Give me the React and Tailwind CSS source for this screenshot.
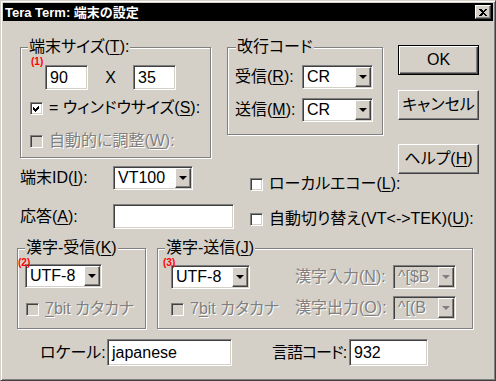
import React from "react";

const font = "font-['Liberation_Sans','Noto_Sans_CJK_JP',sans-serif]";
const sunken =
  "border border-t-[#808080] border-l-[#808080] border-b-white border-r-white shadow-[inset_1px_1px_0_#404040,inset_-1px_-1px_0_#d4d0c8]";
const raised =
  "border border-t-white border-l-white border-b-[#404040] border-r-[#404040] shadow-[inset_-1px_-1px_0_#808080]";
const etched = "border border-[#808080] shadow-[1px_1px_0_#fff,inset_1px_1px_0_#fff]";
const grayText = "text-[#808080] [text-shadow:1px_1px_0_#fff]";

function U({ children }) {
  return <span className="underline underline-offset-[2px]">{children}</span>;
}

function Arrow({ disabled }) {
  return (
    <span
      className={`w-0 h-0 border-x-[4px] border-x-transparent border-t-[4px] ${
        disabled ? "border-t-[#808080]" : "border-t-black"
      }`}
    />
  );
}

function Combo({ className, value, disabled }) {
  return (
    <div className={`${className} shrink-0 h-[24px] p-[1px] flex ${sunken} ${disabled ? "bg-[#d4d0c8]" : "bg-white"}`}>
      <span className={`flex-1 flex items-center pl-[3px] text-[16px] ${disabled ? grayText : ""}`}>{value}</span>
      <span className={`w-[16px] h-full bg-[#d4d0c8] flex items-center justify-center ${raised}`}>
        <Arrow disabled={disabled} />
      </span>
    </div>
  );
}

function Field({ className, value }) {
  return (
    <div className={`${className} shrink-0 bg-white flex items-center pl-[4px] ${sunken}`}>{value}</div>
  );
}

function Check({ checked, disabled, children }) {
  return (
    <div className="flex items-center whitespace-nowrap">
      <span className={`w-[13px] h-[13px] relative shrink-0 ${sunken} ${disabled ? "bg-[#d4d0c8]" : "bg-white"}`}>
        {checked && (
          <svg className="absolute left-[1px] top-[1px]" width="9" height="9" viewBox="0 0 9 9" shapeRendering="crispEdges">
            <path d="M1 3 L3 5 L7 1 L7 4 L3 8 L1 6 Z" fill="#000" />
          </svg>
        )}
      </span>
      <span className={`ml-[6px] ${disabled ? grayText : ""}`}>{children}</span>
    </div>
  );
}

function Legend({ children, className }) {
  return (
    <span className={`absolute top-[-9px] px-[1px] bg-[#d4d0c8] whitespace-nowrap ${className}`}>{children}</span>
  );
}

function Mark({ children, className }) {
  return (
    <span className={`absolute text-[10px] font-bold text-[#ff0000] font-['Liberation_Sans',sans-serif] ${className}`}>
      {children}
    </span>
  );
}

function Button({ children, isDefault, className }) {
  return (
    <div
      className={`w-[81px] h-[30px] flex items-center justify-center ${className} ${
        isDefault
          ? "border border-black shadow-[inset_1px_1px_0_#fff,inset_-1px_-1px_0_#404040,inset_-2px_-2px_0_#808080]"
          : raised
      }`}
    >
      {children}
    </div>
  );
}

export default function App() {
  return (
    <div
      className={`w-[496px] h-[381px] p-[1px] bg-[#d4d0c8] border border-t-[#d4d0c8] border-l-[#d4d0c8] border-b-[#404040] border-r-[#404040] shadow-[inset_1px_1px_0_#fff,inset_-1px_-1px_0_#808080] ${font} text-black text-[16px] leading-none [font-feature-settings:'palt'] select-none overflow-hidden`}
    >
      {/* title bar */}
      <div className="mx-[1px] mt-[1px] h-[18px] bg-black flex items-center justify-between pl-[2px] pr-[2px]">
        <span className="text-white font-bold text-[13px]">Tera Term: 端末の設定</span>
        <span className={`w-[16px] h-[14px] bg-[#d4d0c8] flex items-center justify-center ${raised}`}>
          <svg width="8" height="7" viewBox="0 0 8 7" shapeRendering="crispEdges">
            <path d="M0 0h2l2 2 2-2h2v1L5 3.5 8 6v1H6L4 5 2 7H0V6l3-2.5L0 1z" fill="#000" />
          </svg>
        </span>
      </div>

      <div className="flex">
        {/* left column */}
        <div className="ml-[18px] w-[363px] shrink-0">
          <div className="mt-[26px] flex gap-[16px] items-start">
            <div className={`relative w-[191px] h-[111px] pt-[17px] shrink-0 ${etched}`}>
              <Legend className="left-[7px]">
                端末サイズ(<U>T</U>):
              </Legend>
              <Mark className="left-[10px] top-[9px]">(1)</Mark>
              <div className="ml-[24px] flex items-center">
                <Field className="w-[43px] h-[25px]" value="90" />
                <span className="w-[45px] shrink-0 text-center">X</span>
                <Field className="w-[43px] h-[25px]" value="35" />
              </div>
              <div className="mt-[10px] ml-[9px]">
                <Check checked>
                  = ウィンドウサイズ(<U>S</U>):
                </Check>
              </div>
              <div className="mt-[17px] ml-[9px]">
                <Check disabled>
                  自動的に調整(<U>W</U>):
                </Check>
              </div>
            </div>

            <div className={`relative w-[156px] h-[88px] pt-[17px] shrink-0 ${etched}`}>
              <Legend className="left-[8px]">改行コード</Legend>
              <div className="ml-[7px] flex items-center">
                <span className="w-[67px] shrink-0 whitespace-nowrap">
                  受信(<U>R</U>):
                </span>
                <Combo className="w-[71px]" value="CR" />
              </div>
              <div className="mt-[9px] ml-[7px] flex items-center">
                <span className="w-[67px] shrink-0 whitespace-nowrap">
                  送信(<U>M</U>):
                </span>
                <Combo className="w-[71px]" value="CR" />
              </div>
            </div>
          </div>

          <div className="mt-[8px] flex items-start">
            <span className="w-[93px] h-[24px] shrink-0 flex items-center whitespace-nowrap">
              端末ID(<U>I</U>):
            </span>
            <Combo className="w-[80px]" value="VT100" />
            <div className="ml-[57px] mt-[10px] shrink-0">
              <Check>
                ローカルエコー(<U>L</U>):
              </Check>
            </div>
          </div>

          <div className="mt-[12px] flex items-start">
            <span className="w-[93px] h-[25px] shrink-0 flex items-center whitespace-nowrap">
              応答(<U>A</U>):
            </span>
            <Field className="w-[121px] h-[25px]" value="" />
            <div className="ml-[16px] mt-[7px] shrink-0">
              <Check>
                自動切り替え(VT&lt;-&gt;TEK)(<U>U</U>):
              </Check>
            </div>
          </div>
        </div>

        {/* buttons */}
        <div className="ml-[15px] mt-[24px] flex flex-col shrink-0">
          <Button isDefault>OK</Button>
          <Button className="mt-[15px]">キャンセル</Button>
          <Button className="mt-[24px]">
            ヘルプ(<U>H</U>)
          </Button>
        </div>
      </div>

      {/* kanji groups */}
      <div className="mt-[19px] ml-[15px] flex gap-[11px]">
        <div className={`relative w-[129px] h-[81px] pt-[15px] shrink-0 ${etched}`}>
          <Legend className="left-[7px]">
            漢字-受信(<U>K</U>)
          </Legend>
          <Mark className="left-[0px] top-[9px]">(2)</Mark>
          <Combo className="ml-[7px] w-[77px]" value="UTF-8" />
          <div className="mt-[13px] ml-[8px]">
            <Check disabled>
              <U>7</U>bit カタカナ
            </Check>
          </div>
        </div>

        <div className={`relative w-[316px] h-[81px] pt-[16px] flex shrink-0 ${etched}`}>
          <Legend className="left-[7px]">
            漢字-送信(<U>J</U>)
          </Legend>
          <Mark className="left-[5px] top-[9px]">(3)</Mark>
          <div className="ml-[13px] w-[79px] shrink-0">
            <Combo className="w-[79px]" value="UTF-8" />
            <div className="mt-[12px] ml-[0px]">
              <Check disabled>
                7<U>b</U>it カタカナ
              </Check>
            </div>
          </div>
          <div className="ml-[45px] shrink-0">
            <div className="flex items-center">
              <span className={`w-[98px] shrink-0 whitespace-nowrap ${grayText}`}>
                漢字入力(<U>N</U>):
              </span>
              <Combo className="w-[63px]" value="^[$B" disabled />
            </div>
            <div className="mt-[7px] flex items-center">
              <span className={`w-[98px] shrink-0 whitespace-nowrap ${grayText}`}>
                漢字出力(<U>O</U>):
              </span>
              <Combo className="w-[63px]" value="^[(B" disabled />
            </div>
          </div>
        </div>
      </div>

      {/* locale row */}
      <div className="mt-[10px] ml-[38px] flex items-center">
        <span className="w-[67px] shrink-0 whitespace-nowrap">ロケール:</span>
        <Field className="w-[125px] h-[27px]" value="japanese" />
        <span className="ml-[40px] w-[77px] shrink-0 whitespace-nowrap tracking-[-1px]">言語コード:</span>
        <Field className="w-[79px] h-[27px]" value="932" />
      </div>
    </div>
  );
}
